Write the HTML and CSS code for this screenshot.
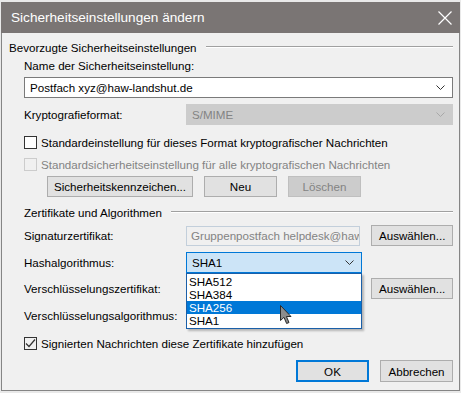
FILE: index.html
```html
<!DOCTYPE html>
<html lang="de">
<head>
    <meta charset="UTF-8">
    <title>Sicherheitseinstellungen ändern</title>
    <link rel="stylesheet" href="styles.css">
</head>
<body>
    <div class="window">
        <div class="titlebar">
            <span class="title">Sicherheitseinstellungen ändern</span>
            <svg class="close" width="14" height="14" viewBox="0 0 14 14">
                <path d="M0.5 0.5 L13.5 13.5 M13.5 0.5 L0.5 13.5" stroke="#fff" stroke-width="1.2" fill="none"/>
            </svg>
        </div>

        <div class="content">
            <div class="group-head first">
                <span>Bevorzugte Sicherheitseinstellungen</span>
                <div class="rule"></div>
            </div>

            <div class="label-row indent">Name der Sicherheitseinstellung:</div>
            <div class="combo wide indent">
                <span>Postfach xyz@haw-landshut.de</span>
                <svg class="chev" width="9" height="5" viewBox="0 0 9 5"><path d="M0.5 0.5 L4.5 4.5 L8.5 0.5" stroke="#333" fill="none"/></svg>
            </div>

            <div class="field-row krypto indent">
                <span class="field-label">Kryptografieformat:</span>
                <div class="combo disabled grow">
                    <span>S/MIME</span>
                    <svg class="chev" width="9" height="5" viewBox="0 0 9 5"><path d="M0.5 0.5 L4.5 4.5 L8.5 0.5" stroke="#a8a8a8" fill="none"/></svg>
                </div>
            </div>

            <div class="check-row indent c1">
                <span class="box"></span>
                <span>Standardeinstellung für dieses Format kryptografischer Nachrichten</span>
            </div>
            <div class="check-row indent c2 off">
                <span class="box"></span>
                <span>Standardsicherheitseinstellung für alle kryptografischen Nachrichten</span>
            </div>

            <div class="button-row">
                <button class="btn kennz">Sicherheitskennzeichen...</button>
                <button class="btn small">Neu</button>
                <button class="btn small disabled">Löschen</button>
            </div>

            <div class="group-head second indent">
                <span>Zertifikate und Algorithmen</span>
                <div class="rule"></div>
            </div>

            <div class="field-row sig indent">
                <span class="field-label">Signaturzertifikat:</span>
                <div class="textbox">Gruppenpostfach helpdesk@haw</div>
                <button class="btn pick">Auswählen...</button>
            </div>

            <div class="field-row hash indent">
                <span class="field-label">Hashalgorithmus:</span>
                <div class="combo focused mid">
                    <span>SHA1</span>
                    <svg class="chev" width="9" height="5" viewBox="0 0 9 5"><path d="M0.5 0.5 L4.5 4.5 L8.5 0.5" stroke="#333" fill="none"/></svg>
                </div>
                <div class="dropdown">
                    <div class="opt">SHA512</div>
                    <div class="opt">SHA384</div>
                    <div class="opt sel">SHA256</div>
                    <div class="opt">SHA1</div>
                </div>
                <svg class="cursor" width="13" height="20" viewBox="0 0 13 20">
                    <path d="M0.5 0.5 L0.5 15.5 L4 12.3 L6.6 18.5 L9 17.5 L6.4 11.5 L11 11.5 Z" fill="#8c8c8c" stroke="#2a2a2a" stroke-width="1"/>
                </svg>
            </div>

            <div class="field-row enc indent">
                <span class="field-label">Verschlüsselungszertifikat:</span>
                <div class="spacer"></div>
                <button class="btn pick">Auswählen...</button>
            </div>

            <div class="field-row algo indent">
                <span class="field-label">Verschlüsselungsalgorithmus:</span>
            </div>

            <div class="check-row indent c3">
                <span class="box checked">
                    <svg width="11" height="11" viewBox="0 0 11 11"><path d="M1 5.5 L4 8.5 L10 1.5" stroke="#333" stroke-width="1.2" fill="none"/></svg>
                </span>
                <span>Signierten Nachrichten diese Zertifikate hinzufügen</span>
            </div>

            <div class="footer">
                <button class="btn foot default">OK</button>
                <button class="btn foot">Abbrechen</button>
            </div>
        </div>
    </div>
</body>
</html>
```

FILE: styles.css
```css
:root {
    --title-bg: #7a7574;
    --dialog-bg: #f0f0f0;
    --text: #000;
    --muted: #838383;
    --accent: #0078d7;
    --btn-bg: #e1e1e1;
    --btn-border: #adadad;
}

* {
    box-sizing: border-box;
    margin: 0;
    padding: 0;
}

body {
    width: 461px;
    height: 393px;
    background: #e9e9e9;
    padding: 2px 1px 0 1px;
    font-family: 'Liberation Sans', Arial, sans-serif;
    font-size: 11.6px;
    color: var(--text);
    overflow: hidden;
}

.window {
    width: 459px;
    height: 389px;
    background: var(--dialog-bg);
    border: 1px solid #858585;
    border-top: none;
    display: flex;
    flex-direction: column;
}

.titlebar {
    height: 31px;
    margin: 0 -1px;
    background: var(--title-bg);
    display: flex;
    align-items: center;
    justify-content: space-between;
    padding: 0 8px 0 10px;
}

.title {
    color: #fff;
    font-size: 13.6px;
}

.content {
    padding: 0 6px 0 7px;
    position: relative;
}

.indent {
    margin-left: 15px;
}

.group-head {
    display: flex;
    align-items: center;
    height: 16px;
    gap: 9px;
}

.group-head.first {
    margin-top: 6px;
}

.group-head.second {
    margin-top: 7px;
}

.rule {
    flex: 1;
    height: 1px;
    background: #a0a0a0;
    box-shadow: 0 1px 0 #fff;
    margin-top: -2px;
}

.label-row {
    height: 14px;
    margin-top: 4px;
    line-height: 14px;
}

.combo {
    height: 21px;
    border: 1px solid #7a7a7a;
    background: #fff;
    display: flex;
    align-items: center;
    justify-content: space-between;
    padding: 0 7px 0 5px;
}

.combo.wide {
    margin-top: 4px;
}

.combo.disabled {
    background: #cccccc;
    border-color: #cccccc;
    color: var(--muted);
}

.combo.focused {
    background: #cce4f7;
    border-color: var(--accent);
}

.grow {
    flex: 1;
}

.field-row {
    display: flex;
    align-items: center;
    height: 21px;
    position: relative;
}

.field-label {
    width: 162px;
    flex: none;
}

.krypto {
    margin-top: 6px;
}

.check-row {
    display: flex;
    align-items: center;
    gap: 4px;
    height: 14px;
}

.check-row.c1 {
    margin-top: 10px;
}

.check-row.c2 {
    margin-top: 8px;
}

.check-row.c3 {
    margin-top: 10px;
}

.check-row.off {
    color: var(--muted);
}

.box {
    width: 13px;
    height: 13px;
    border: 1px solid #333;
    background: #fff;
    display: flex;
    align-items: center;
    justify-content: center;
}

.off .box {
    border-color: #cccccc;
    background: var(--dialog-bg);
}

.box.checked {
    background: var(--dialog-bg);
}

.button-row {
    display: flex;
    gap: 11px;
    margin: 5px 0 0 38px;
}

.btn {
    height: 21px;
    background: var(--btn-bg);
    border: 1px solid var(--btn-border);
    font-family: inherit;
    font-size: 11.6px;
    color: var(--text);
}

.btn.kennz {
    width: 146px;
}

.btn.small {
    width: 73px;
}

.btn.disabled {
    background: #cccccc;
    border-color: #bfbfbf;
    color: var(--muted);
}

.sig {
    margin-top: 5px;
}

.textbox {
    width: 175px;
    height: 20px;
    border: 1px solid #c3cfdb;
    background: var(--dialog-bg);
    color: var(--muted);
    padding: 0 0 0 4px;
    line-height: 18px;
    white-space: nowrap;
    overflow: hidden;
}

.btn.pick {
    width: 82px;
    margin-left: 11px;
}

.hash {
    margin-top: 6px;
}

.combo.mid {
    width: 176px;
}

.spacer {
    width: 175px;
}

.enc {
    margin-top: 5px;
}

.algo {
    margin-top: 6px;
}

.dropdown {
    position: absolute;
    left: 162px;
    top: 21px;
    width: 176px;
    border: 1px solid #1a5fa8;
    background: #fff;
    box-shadow: 2px 2px 2px rgba(0, 0, 0, 0.25);
    padding: 1px 0;
    z-index: 2;
}

.opt {
    height: 13px;
    line-height: 13px;
    padding-left: 2px;
}

.opt.sel {
    background: var(--accent);
    color: #fff;
}

.cursor {
    position: absolute;
    left: 256px;
    top: 53px;
    z-index: 3;
}

.footer {
    display: flex;
    justify-content: flex-end;
    gap: 11px;
    margin-top: 10px;
}

.btn.foot {
    width: 73px;
    height: 22px;
}

.btn.default {
    border: 2px solid var(--accent);
}
```
